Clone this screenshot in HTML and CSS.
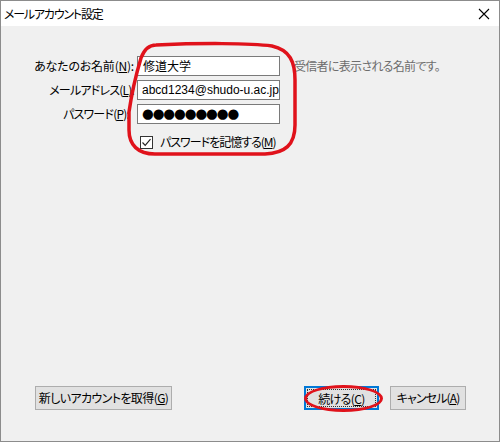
FILE: index.html
```html
<!DOCTYPE html>
<html lang="ja">
<head>
<meta charset="utf-8">
<title>メールアカウント設定</title>
<link rel="stylesheet" href="styles.css">
</head>
<body>
<div class="window">
  <div class="titlebar">
    <span class="title">メールアカウント設定</span>
    <svg class="close" width="12" height="12" viewBox="0 0 12 12"><path d="M1 1 L11 11 M11 1 L1 11" stroke="#000" stroke-width="1.1" fill="none"/></svg>
  </div>
  <div class="content">
    <div class="form">
      <label class="lbl">あなたのお名前(<u>N</u>):</label>
      <div class="field">修道大学</div>
      <div class="hint">受信者に表示される名前です。</div>

      <label class="lbl kana">メールアドレス(<u>L</u>):</label>
      <div class="field latin">abcd1234@shudo-u.ac.jp</div>
      <div></div>

      <label class="lbl kana short">パスワード(<u>P</u>):</label>
      <div class="field dots">●●●●●●●●●</div>
      <div></div>

      <div></div>
      <div class="check-row">
        <span class="checkbox"><svg width="11" height="11" viewBox="0 0 11 11"><path d="M1.5 5.5 L4.2 8.3 L9.5 2.2" stroke="#222" stroke-width="1.2" fill="none"/></svg></span>
        <span class="check-label">パスワードを記憶する(<u>M</u>)</span>
      </div>
      <div></div>
    </div>

    <div class="footer">
      <button class="btn wide">新しいアカウントを取得(<u>G</u>)</button>
      <div class="right">
        <button class="btn default"><span class="focus">続ける(<u>C</u>)</span><span class="mark-ellipse"></span></button>
        <button class="btn kana-btn">キャンセル(<u>A</u>)</button>
      </div>
    </div>
  </div>
  <svg class="mark-overlay" width="500" height="442" viewBox="0 0 500 442">
    <path d="M156 45 C200 43 250 43 272 46 C290 50 295 62 295 80 L295 125 C295 145 285 153 265 154 L155 154 C138 154 129 145 129 130 L129 112 C131 98 135 78 141 58 C144 50 149 45 156 45 Z" fill="none" stroke="#e0121b" stroke-width="3.5"/>
  </svg>
</div>
</body>
</html>
```

FILE: styles.css
```css
* { box-sizing: border-box; }
html, body { margin: 0; padding: 0; background: #f0f0f0; }
body {
  font-family: "Noto Sans CJK JP", sans-serif;
  font-size: 12px;
  font-feature-settings: "palt";
  color: #000;
}
u { text-decoration: underline; text-underline-offset: 1px; }

.window {
  position: relative;
  width: 500px;
  height: 442px;
  border: 1px solid #8c8c8c;
  display: flex;
  flex-direction: column;
  background: #f0f0f0;
}
.mark-overlay {
  position: absolute;
  left: -1px;
  top: -1px;
  pointer-events: none;
}

.titlebar {
  height: 25px;
  background: #fff;
  display: flex;
  align-items: center;
  justify-content: space-between;
  padding: 0 8px 0 3px;
  flex: none;
}
.title { font-size: 12px; line-height: 16px; letter-spacing: -1.2px; }
.close { display: block; margin-right: 1px; }

.content {
  flex: 1;
  display: flex;
  flex-direction: column;
}

.form {
  display: grid;
  grid-template-columns: 133px 143px 1fr;
  grid-auto-rows: 20px;
  row-gap: 4px;
  column-gap: 3px;
  padding-top: 30px;
}
.lbl {
  text-align: right;
  line-height: 20px;
  white-space: nowrap;
  letter-spacing: -0.2px;
}
.lbl.kana { letter-spacing: -0.8px; }
.lbl.short { padding-right: 5px; }
.field {
  background: #fff;
  border: 1px solid #7a7a7a;
  height: 20px;
  line-height: 17px;
  padding-left: 5px;
  white-space: nowrap;
  overflow: hidden;
}
.latin { font-family: "Liberation Sans", Arial, sans-serif; font-size: 12px; font-feature-settings: normal; line-height: 18px; padding-left: 4px; }
.dots { font-family: "DejaVu Sans", sans-serif; font-size: 13.5px; letter-spacing: -1.1px; line-height: 17px; padding-left: 4px; }
.hint {
  color: #6d6d6d;
  line-height: 20px;
  padding-left: 11px;
  white-space: nowrap;
  letter-spacing: -0.7px;
}

.check-row {
  grid-column: 2 / span 2;
  margin-top: 4px;
  display: flex;
  align-items: center;
  gap: 7px;
  padding-left: 3px;
  height: 20px;
}
.checkbox {
  width: 13px;
  height: 13px;
  border: 1px solid #333;
  background: #fff;
  display: flex;
  align-items: center;
  justify-content: center;
}
.checkbox svg { display: block; }
.check-label { line-height: 20px; white-space: nowrap; letter-spacing: -1px; }

.footer {
  margin-top: auto;
  display: flex;
  justify-content: space-between;
  align-items: flex-end;
  padding: 0 33px 31px 34px;
}
.right { display: flex; gap: 11px; }
.btn {
  position: relative;
  font-family: "Noto Sans CJK JP", sans-serif;
  font-size: 12px;
  font-feature-settings: "palt";
  height: 24px;
  background: #e1e1e1;
  border: 1px solid #adadad;
  padding: 0;
  margin: 0;
  color: #000;
  line-height: 20px;
  border-radius: 0;
  white-space: nowrap;
  letter-spacing: -0.6px;
}
.kana-btn { letter-spacing: -0.9px; }
.wide { width: 137px; }
.right .btn { width: 76px; }
.default {
  border: 2px solid #0078d7;
  width: 75px !important;
  padding: 1px;
}
.focus {
  display: block;
  height: 18px;
  line-height: 17px;
  border: 1px dotted #333;
}
.mark-ellipse {
  position: absolute;
  left: -2px;
  top: -3px;
  width: 79px;
  height: 27px;
  border: 3px solid #e0121b;
  border-radius: 50%;
  pointer-events: none;
}
```
